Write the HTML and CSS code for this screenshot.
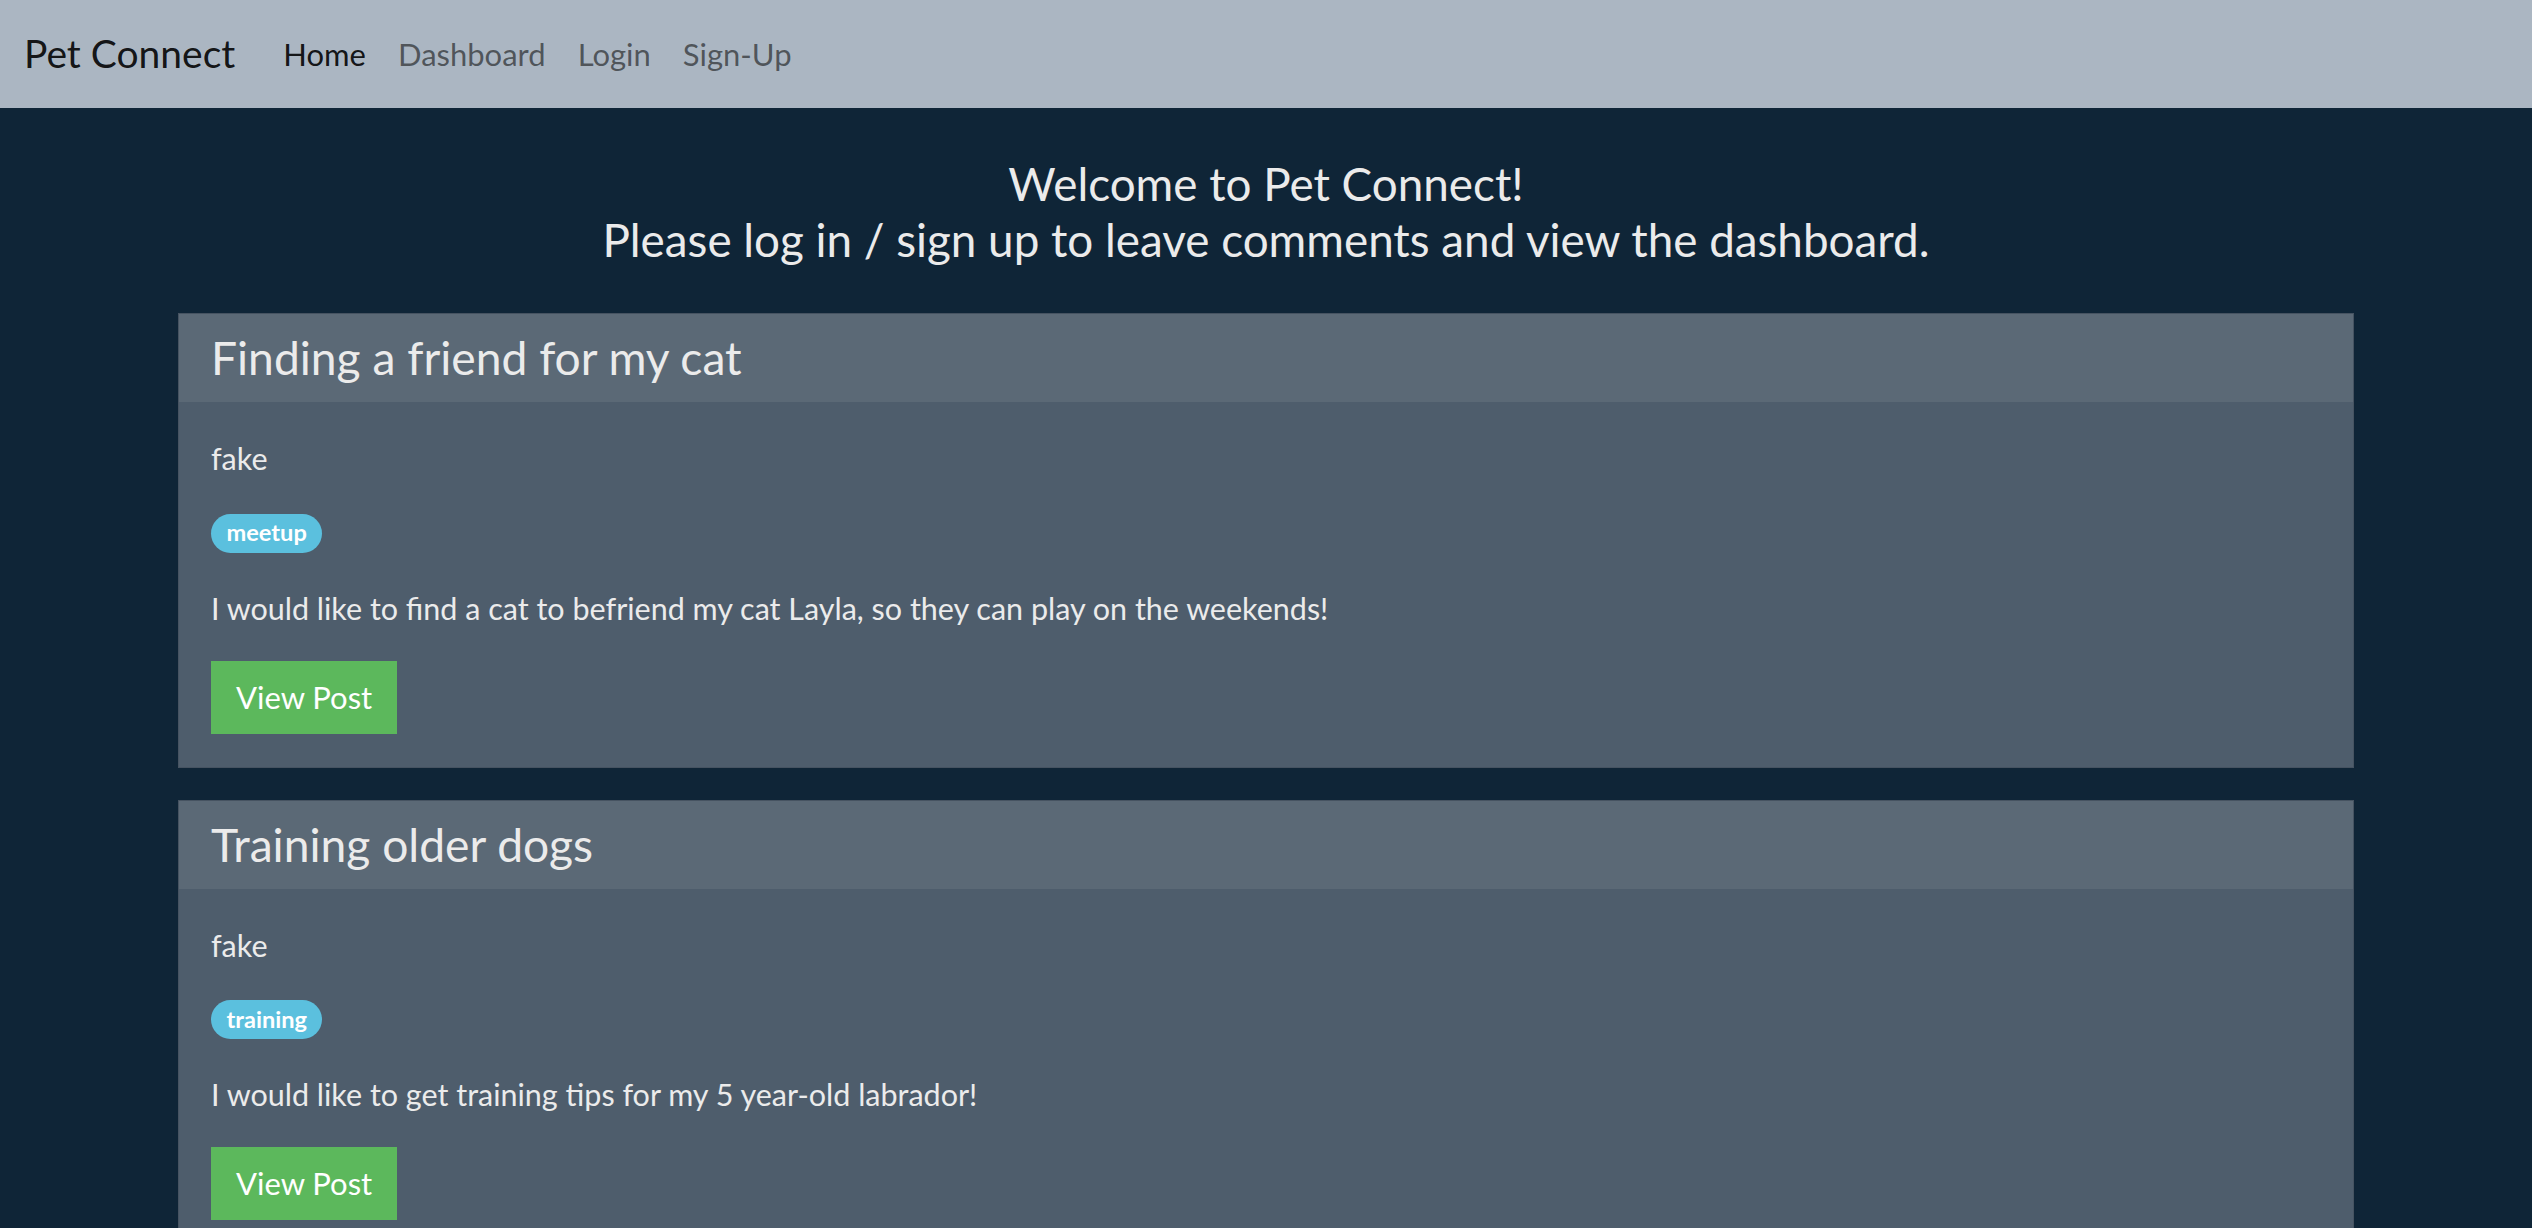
FILE: index.html
```html
<!DOCTYPE html>
<html lang="en">
<head>
<meta charset="utf-8">
<title>Pet Connect</title>
<link rel="stylesheet" href="styles.css">
</head>
<body>
<nav class="navbar">
  <a class="brand" href="#">Pet Connect</a>
  <ul class="nav">
    <li><a class="nav-link active" href="#">Home</a></li>
    <li><a class="nav-link" href="#">Dashboard</a></li>
    <li><a class="nav-link" href="#">Login</a></li>
    <li><a class="nav-link" href="#">Sign-Up</a></li>
  </ul>
</nav>
<main class="container">
  <h1 class="welcome">Welcome to Pet Connect!<br>Please log in / sign up to leave comments and view the dashboard.</h1>

  <article class="card">
    <header class="card-header"><h2 class="card-title">Finding a friend for my cat</h2></header>
    <div class="card-body">
      <p class="author">fake</p>
      <div class="tags"><span class="badge">meetup</span></div>
      <p class="card-text">I would like to find a cat to befriend my cat Layla, so they can play on the weekends!</p>
      <a class="btn" href="#">View Post</a>
    </div>
  </article>

  <article class="card">
    <header class="card-header"><h2 class="card-title">Training older dogs</h2></header>
    <div class="card-body">
      <p class="author">fake</p>
      <div class="tags"><span class="badge">training</span></div>
      <p class="card-text">I would like to get training tips for my 5 year-old labrador!</p>
      <a class="btn" href="#">View Post</a>
    </div>
  </article>
</main>
</body>
</html>
```
FILE: styles.css
```css
* { box-sizing: border-box; }
html, body { margin: 0; padding: 0; }
body {
  background: #0f2537;
  color: #ebebeb;
  font-family: Lato, "Open Sans", "Liberation Sans", sans-serif;
  font-size: 30.5px;
  line-height: 1.5;
}
a { text-decoration: none; }

.navbar {
  display: flex;
  align-items: center;
  height: 108px;
  padding: 0 24px;
  background: #abb6c2;
}
.brand {
  font-size: 39px;
  line-height: 1.5;
  color: rgba(0, 0, 0, 0.9);
  margin-right: 32px;
  margin-top: -2px;
}
.nav {
  display: flex;
  list-style: none;
  margin: 0;
  padding: 0;
}
.nav-link {
  display: block;
  padding: 0 16px;
  font-size: 31px;
  line-height: 45px;
  color: rgba(0, 0, 0, 0.55);
}
.nav-link.active { color: rgba(0, 0, 0, 0.9); }

.container {
  width: 2176px;
  margin: 0 auto;
}
.welcome {
  margin: 48px 0 46px;
  text-align: center;
  font-size: 45.8px;
  font-weight: 400;
  line-height: 55.5px;
}

.card {
  background: #4e5d6c;
  border: 1px solid rgba(0, 0, 0, 0.1);
  margin-bottom: 32px;
}
.card-header {
  background: rgba(255, 255, 255, 0.075);
  padding: 15px 32px 16px;
}
.card-title {
  margin: 0;
  font-size: 46.2px;
  font-weight: 400;
  line-height: 57px;
}
.card-body {
  padding: 32px 32px 33px;
}
.author {
  margin: 0 0 31px;
  line-height: 48.75px;
}
.card-text {
  margin: 0 0 28px;
  line-height: 48.75px;
}
.tags {
  display: flex;
  margin-bottom: 31px;
}
.badge {
  display: inline-block;
  background: #5bc0de;
  color: #fff;
  font-size: 23.6px;
  font-weight: 700;
  line-height: 1;
  padding: 7.5px 15.5px;
  border-radius: 20px;
  height: 39px;
}
.btn {
  display: inline-block;
  background: #5cb85c;
  color: #fff;
  font-size: 31px;
  line-height: 45px;
  padding: 14px 25px;
}
```
